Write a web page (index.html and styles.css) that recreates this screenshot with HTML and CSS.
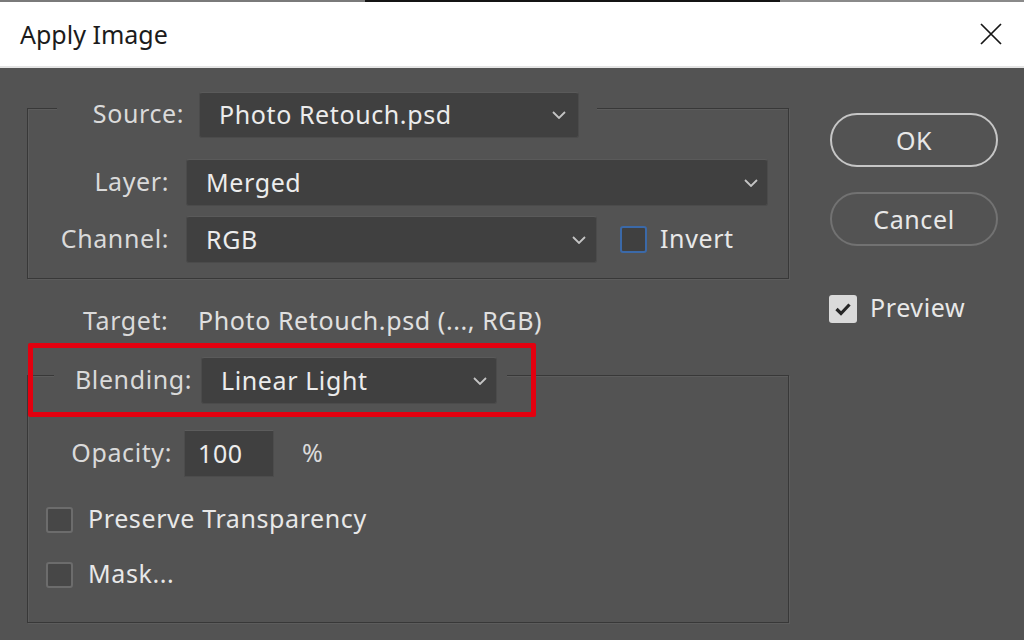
FILE: index.html
```html
<!DOCTYPE html>
<html lang="en">
<head>
<meta charset="utf-8">
<title>Apply Image</title>
<link rel="stylesheet" href="styles.css">
</head>
<body>
<div class="topstrip"></div>
<header class="titlebar">
  <span class="title">Apply Image</span>
  <svg class="close" width="24" height="24" viewBox="0 0 24 24"><path d="M2 2 L22 22 M22 2 L2 22" stroke="#151515" stroke-width="1.7" fill="none"/></svg>
</header>
<main class="dialog">
  <section class="left">
    <div class="group group-source">
      <div class="legend legend-source">
        <span class="label label-source">Source:</span>
        <div class="select w-source"><span class="sel-text">Photo Retouch.psd</span><svg class="chev" width="14" height="8" viewBox="0 0 14 8"><path d="M1 1 L7 7 L13 1" stroke="#c4c4c4" stroke-width="1.8" fill="none"/></svg></div>
      </div>
      <div class="row row-layer">
        <span class="label label-col">Layer:</span>
        <div class="select w-layer"><span class="sel-text">Merged</span><svg class="chev" width="14" height="8" viewBox="0 0 14 8"><path d="M1 1 L7 7 L13 1" stroke="#c4c4c4" stroke-width="1.8" fill="none"/></svg></div>
      </div>
      <div class="row row-channel">
        <span class="label label-col">Channel:</span>
        <div class="select w-channel"><span class="sel-text">RGB</span><svg class="chev" width="14" height="8" viewBox="0 0 14 8"><path d="M1 1 L7 7 L13 1" stroke="#c4c4c4" stroke-width="1.8" fill="none"/></svg></div>
        <div class="check check-invert"><span class="box box-focus"></span><span class="check-text">Invert</span></div>
      </div>
    </div>
    <div class="target"><span class="label label-target">Target:</span><span class="value">Photo Retouch.psd (..., RGB)</span></div>
    <div class="group group-blend">
      <div class="legend legend-blend">
        <span class="label label-blend">Blending:</span>
        <div class="select w-blend"><span class="sel-text">Linear Light</span><svg class="chev" width="14" height="8" viewBox="0 0 14 8"><path d="M1 1 L7 7 L13 1" stroke="#c4c4c4" stroke-width="1.8" fill="none"/></svg></div>
      </div>
      <div class="row row-opacity">
        <span class="label label-opacity">Opacity:</span>
        <div class="input"><span class="sel-text">100</span></div>
        <span class="pct">%</span>
      </div>
      <div class="check checkrow checkrow-first"><span class="box"></span><span class="check-text">Preserve Transparency</span></div>
      <div class="check checkrow checkrow-second"><span class="box"></span><span class="check-text">Mask...</span></div>
    </div>
    <div class="highlight"></div>
  </section>
  <aside class="right">
    <div class="btn btn-ok">OK</div>
    <div class="btn btn-cancel">Cancel</div>
    <div class="check check-preview">
      <span class="box box-checked"><svg width="28" height="28" viewBox="0 0 28 28"><path d="M7.5 14 L12 18.5 L20.5 9.5" stroke="#262626" stroke-width="3.2" fill="none"/></svg></span>
      <span class="check-text">Preview</span>
    </div>
  </aside>
</main>
</body>
</html>
```

FILE: styles.css
```css
* { box-sizing: border-box; }

html, body {
  margin: 0;
  padding: 0;
}

body {
  width: 1024px;
  height: 640px;
  overflow: hidden;
  font-family: "Noto Sans", "Open Sans", sans-serif;
  font-size: 25px;
  background: #535353;
}

.topstrip {
  height: 2px;
  background: linear-gradient(to right, #7a7a7a 0, #7a7a7a 365px, #141414 365px, #141414 780px, #8a8a8a 780px, #8a8a8a 100%);
}

.titlebar {
  height: 66px;
  background: #ffffff;
  border-bottom: 2px solid #e4e4e4;
  display: flex;
  align-items: center;
  justify-content: space-between;
  padding: 0 21px 0 20px;
}

.title {
  color: #1b1b1b;
  font-size: 25px;
  line-height: 30px;
}

.close { display: block; }

.dialog {
  display: flex;
  height: 572px;
  background: #535353;
  color: #e6e6e6;
  letter-spacing: 0.6px;
}

.left {
  position: relative;
  width: 789px;
  padding-left: 27px;
}

.group {
  border: 1px solid #383838;
  box-shadow: inset 1px 1px 0 #5c5c5c, 1px 1px 0 #5c5c5c;
  width: 762px;
}

.group-source {
  margin-top: 40px;
  height: 171px;
  padding-bottom: 15px;
}

.group-blend {
  margin-top: 40px;
  height: 248px;
}

.legend {
  display: flex;
  align-items: center;
  width: fit-content;
  background: #535353;
}

.legend-source {
  margin-top: -17px;
  margin-left: 29px;
  padding: 0 18px 0 35px;
}

.legend-blend {
  margin-top: -19px;
  margin-left: 26px;
  padding: 0 10px 0 21px;
}

.label {
  color: #dadada;
  line-height: 30px;
  padding-bottom: 4px;
  white-space: nowrap;
}

.label-source {
  width: 92px;
  text-align: right;
  margin-right: 15px;
}

.label-col {
  width: 141px;
  text-align: right;
  margin-right: 17px;
}

.label-blend {
  width: 113px;
  text-align: right;
  margin-right: 13px;
}

.label-opacity {
  width: 144px;
  text-align: right;
  margin-right: 12px;
}

.label-target {
  width: 115px;
}

.row {
  display: flex;
  align-items: center;
}

.row-layer { margin-top: 21px; }
.row-channel { margin-top: 10px; }
.row-opacity { margin-top: 26px; }

.select {
  display: flex;
  align-items: center;
  justify-content: space-between;
  height: 47px;
  background: #404040;
  border: 1px solid #4b4b4b;
  border-top-color: #5a5a5a;
  border-radius: 3px;
  padding: 0 9px 0 19px;
  color: #ececec;
  line-height: 30px;
}

.sel-text { padding-bottom: 2px; }

.w-source { width: 380px; height: 46px; padding-right: 12px; }
.w-layer { width: 582px; padding-right: 9px; }
.w-channel { width: 411px; padding-right: 10px; }
.w-blend { width: 296px; padding-right: 9px; }

.chev { display: block; flex: none; }

.check {
  display: flex;
  align-items: center;
}

.check-invert { margin-left: 23px; }

.box {
  display: block;
  flex: none;
  width: 27px;
  height: 26px;
  border: 2px solid #6c6c6c;
  border-radius: 3px;
  background: #474747;
}

.box-focus {
  width: 27px;
  height: 27px;
  border-color: #3b69a8;
  background: #404040;
}

.check-text {
  margin-left: 15px;
  color: #e8e8e8;
  line-height: 30px;
  padding-bottom: 4px;
  white-space: nowrap;
}

.check-invert .check-text { margin-left: 13px; }

.target {
  display: flex;
  margin-top: 26px;
  padding-left: 56px;
  line-height: 30px;
}

.target .label { padding-bottom: 0; }

.value { color: #e0e0e0; }

.input {
  width: 90px;
  height: 47px;
  background: #404040;
  border: 1px solid #4c4c4c;
  border-top-color: #5c5c5c;
  padding-left: 13px;
  display: flex;
  align-items: center;
  line-height: 30px;
  color: #ececec;
}

.pct {
  margin-left: 28px;
  color: #dadada;
  line-height: 30px;
  padding-bottom: 4px;
}

.checkrow { padding-left: 18px; height: 26px; }
.checkrow-first { margin-top: 30px; }
.checkrow-second { margin-top: 29px; }

.highlight {
  position: absolute;
  left: 28px;
  top: 275px;
  width: 508px;
  height: 74px;
  border: 5px solid #e3000f;
  border-radius: 2px;
}

.right {
  padding-top: 45px;
  margin-left: 41px;
  width: 168px;
}

.btn {
  width: 168px;
  height: 54px;
  border-radius: 27px;
  display: flex;
  align-items: center;
  justify-content: center;
  color: #e8e8e8;
  line-height: 30px;
}

.btn-ok { border: 2px solid #c6c6c6; }

.btn-cancel {
  margin-top: 25px;
  border: 2px solid #727272;
}

.check-preview { margin-top: 46px; margin-left: -1px; }

.box-checked {
  width: 28px;
  height: 28px;
  border: none;
  background: #dadada;
  border-radius: 3px;
}

.box-checked svg { display: block; }

.check-preview .check-text { margin-left: 13px; }
```
